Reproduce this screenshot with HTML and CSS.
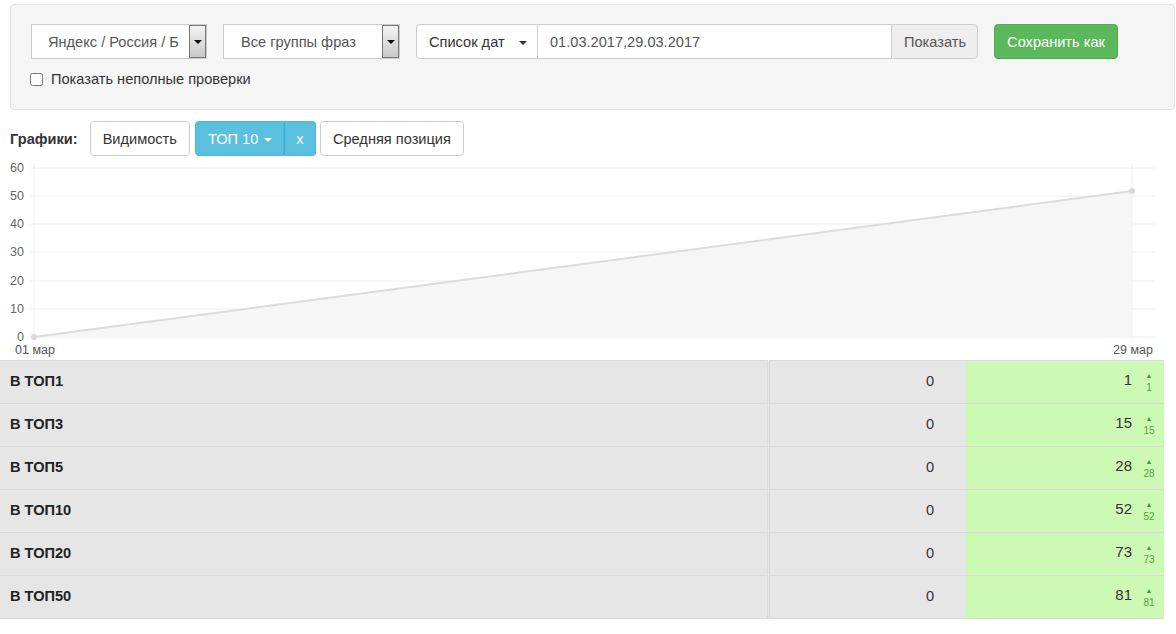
FILE: index.html
```html
<!DOCTYPE html>
<html lang="ru">
<head>
    <meta charset="UTF-8">
    <meta name="viewport" content="width=device-width, initial-scale=1.0">
    <title>Позиции</title>
    <link rel="stylesheet" href="styles.css">
</head>
<body>

    <!-- Filters -->
    <div class="filter-panel">
        <div class="filter-row">
            <div class="fake-select select-engine">
                <span>Яндекс / Россия / Б</span>
                <span class="select-arrow"></span>
            </div>
            <div class="fake-select select-group">
                <span>Все группы фраз</span>
                <span class="select-arrow"></span>
            </div>
            <div class="input-group">
                <button class="btn btn-default btn-dates">Список дат <span class="caret"></span></button>
                <input type="text" class="date-input" value="01.03.2017,29.03.2017">
                <button class="btn btn-show">Показать</button>
            </div>
            <button class="btn btn-success">Сохранить как</button>
        </div>
        <label class="check-row">
            <input type="checkbox">
            <span>Показать неполные проверки</span>
        </label>
    </div>

    <!-- Chart switch -->
    <div class="chart-toolbar">
        <strong>Графики:</strong>
        <button class="btn btn-default">Видимость</button>
        <div class="btn-group">
            <button class="btn btn-info">ТОП 10 <span class="caret"></span></button>
            <button class="btn btn-info btn-close">x</button>
        </div>
        <button class="btn btn-default">Средняя позиция</button>
    </div>

    <!-- Chart -->
    <div class="chart">
        <svg width="1176" height="201" viewBox="0 0 1176 201">
            <g class="grid">
                <line x1="29" y1="9" x2="1155" y2="9"/>
                <line x1="29" y1="37" x2="1155" y2="37"/>
                <line x1="29" y1="65" x2="1155" y2="65"/>
                <line x1="29" y1="93" x2="1155" y2="93"/>
                <line x1="29" y1="122" x2="1155" y2="122"/>
                <line x1="29" y1="150" x2="1155" y2="150"/>
                <line x1="29" y1="178" x2="1155" y2="178"/>
                <line x1="34" y1="4" x2="34" y2="182"/>
                <line x1="1132" y1="4" x2="1132" y2="182"/>
            </g>
            <g class="axis-y">
                <text x="24" y="13">60</text>
                <text x="24" y="41">50</text>
                <text x="24" y="69">40</text>
                <text x="24" y="97">30</text>
                <text x="24" y="126">20</text>
                <text x="24" y="154">10</text>
                <text x="24" y="182">0</text>
            </g>
            <polygon class="area" points="34,178 1132,32 1132,178"/>
            <polyline class="series" points="34,178 1132,32"/>
            <circle class="dot" cx="34" cy="178" r="3"/>
            <circle class="dot" cx="1132" cy="32" r="3"/>
            <text class="axis-x" x="15" y="195">01 мар</text>
            <text class="axis-x" x="1113" y="195">29 мар</text>
        </svg>
    </div>

    <!-- Summary table -->
    <table class="top-table">
        <tr>
            <td class="name">В ТОП1</td>
            <td class="prev">0</td>
            <td class="cur">1<span class="delta"><i>▲</i>1</span></td>
        </tr>
        <tr>
            <td class="name">В ТОП3</td>
            <td class="prev">0</td>
            <td class="cur">15<span class="delta"><i>▲</i>15</span></td>
        </tr>
        <tr>
            <td class="name">В ТОП5</td>
            <td class="prev">0</td>
            <td class="cur">28<span class="delta"><i>▲</i>28</span></td>
        </tr>
        <tr>
            <td class="name">В ТОП10</td>
            <td class="prev">0</td>
            <td class="cur">52<span class="delta"><i>▲</i>52</span></td>
        </tr>
        <tr>
            <td class="name">В ТОП20</td>
            <td class="prev">0</td>
            <td class="cur">73<span class="delta"><i>▲</i>73</span></td>
        </tr>
        <tr>
            <td class="name">В ТОП50</td>
            <td class="prev">0</td>
            <td class="cur">81<span class="delta"><i>▲</i>81</span></td>
        </tr>
    </table>

</body>
</html>
```

FILE: styles.css
```css
* {
    box-sizing: border-box;
    margin: 0;
    padding: 0;
}

body {
    font-family: 'Liberation Sans', Arial, sans-serif;
    font-size: 14.6px;
    color: #333;
    background: #fff;
}

/* Filter panel */
.filter-panel {
    margin: 4px 1px 0 10px;
    padding: 19px 20px 14px 20px;
    background: #f5f5f5;
    border: 1px solid #e3e3e3;
    border-radius: 4px;
    height: 106px;
}

.filter-row {
    display: flex;
    align-items: center;
}

.fake-select {
    height: 35px;
    background: #fff;
    border: 1px solid #ccc;
    display: flex;
    align-items: stretch;
    justify-content: space-between;
    color: #555;
}

.fake-select span:first-child {
    align-self: center;
    padding-left: 16px;
}

.select-engine {
    width: 176px;
    margin-right: 16px;
}

.select-group {
    width: 177px;
    margin-right: 16px;
}

.select-group span:first-child {
    padding-left: 17px;
}

.select-arrow {
    width: 17px;
    border: 1px solid #777;
    background: linear-gradient(#f3f3f3, #c9c9c9);
    position: relative;
}

.select-arrow::after {
    content: '';
    position: absolute;
    left: 4px;
    top: 14px;
    border-left: 4px solid transparent;
    border-right: 4px solid transparent;
    border-top: 4px solid #000;
}

.btn {
    font-family: inherit;
    font-size: 14.6px;
    height: 35px;
    padding: 0 12px;
    border: 1px solid transparent;
    border-radius: 4px;
    cursor: pointer;
    white-space: nowrap;
}

.btn-default {
    background: #fff;
    border-color: #ccc;
    color: #333;
}

.caret {
    display: inline-block;
    width: 0;
    height: 0;
    margin-left: 6px;
    vertical-align: middle;
    border-top: 4px solid;
    border-left: 4px solid transparent;
    border-right: 4px solid transparent;
}

.input-group {
    display: flex;
    width: 562px;
    margin-right: 16px;
}

.btn-dates {
    width: 122px;
    border-radius: 4px 0 0 4px;
    text-align: left;
    padding-left: 12px;
}

.btn-dates .caret {
    margin-left: 10px;
}

.date-input {
    flex: 1;
    height: 35px;
    border: 1px solid #ccc;
    border-left: none;
    border-right: none;
    padding: 0 12px;
    font-family: inherit;
    font-size: 14.6px;
    color: #555;
    outline: none;
}

.btn-show {
    width: 87px;
    background: #eee;
    border-color: #ccc;
    color: #555;
    border-radius: 0 4px 4px 0;
}

.btn-success {
    background: #5cb85c;
    border-color: #4cae4c;
    color: #fff;
    width: 124px;
}

.check-row {
    display: flex;
    align-items: center;
    margin-top: 12px;
    color: #333;
}

.check-row input {
    width: 13px;
    height: 13px;
    margin: 0 8px 0 -1px;
}

/* Chart switch */
.chart-toolbar {
    display: flex;
    align-items: center;
    margin: 11px 0 0 10px;
    height: 35px;
}

.chart-toolbar strong {
    margin-right: 12px;
}

.chart-toolbar .btn-default {
    padding: 0 12px;
}

.btn-group {
    display: flex;
    margin: 0 4px 0 5px;
}

.btn-info {
    background: #5bc0de;
    border-color: #46b8da;
    color: #fff;
    border-radius: 4px 0 0 4px;
    width: 89px;
}

.btn-info .caret {
    margin-left: 2px;
}

.btn-close {
    width: 32px;
    border-radius: 0 4px 4px 0;
    padding: 0;
    border-left-color: #3faed0;
}

/* Chart */
.chart {
    height: 201px;
    margin-top: 3px;
}

.chart svg {
    display: block;
}

.grid line {
    stroke: #eee;
    stroke-width: 1;
}

.axis-y text {
    text-anchor: end;
    font-size: 12.5px;
    fill: #666;
}

.axis-x {
    font-size: 12.5px;
    fill: #555;
}

.area {
    fill: #f6f6f6;
}

.series {
    fill: none;
    stroke: #dcdcdc;
    stroke-width: 2;
}

.dot {
    fill: #d8d8d8;
}

/* Table */
.top-table {
    width: 1164px;
    border-collapse: collapse;
}

.top-table td {
    height: 43px;
    background: #e6e6e6;
    border-top: 1px solid #dadada;
    border-bottom: 1px solid #dadada;
    padding: 0 10px 2px 10px;
    vertical-align: middle;
}

.top-table .name {
    width: 768px;
    font-weight: bold;
    color: #222;
}

.top-table .prev {
    width: 198px;
    text-align: right;
    padding-right: 32px;
    border-left: 3px double #dadada;
}

.top-table .cur {
    width: 198px;
    text-align: right;
    padding-right: 8px;
    background: #ccfab4;
    font-size: 15px;
}

.delta {
    display: inline-block;
    width: 24px;
    text-align: center;
    font-size: 10px;
    line-height: 12px;
    color: #5c9e45;
    vertical-align: middle;
    padding-left: 10px;
    margin-top: 2px;
}

.delta i {
    display: block;
    font-style: normal;
    font-size: 7px;
    color: #3d9a32;
}
```
